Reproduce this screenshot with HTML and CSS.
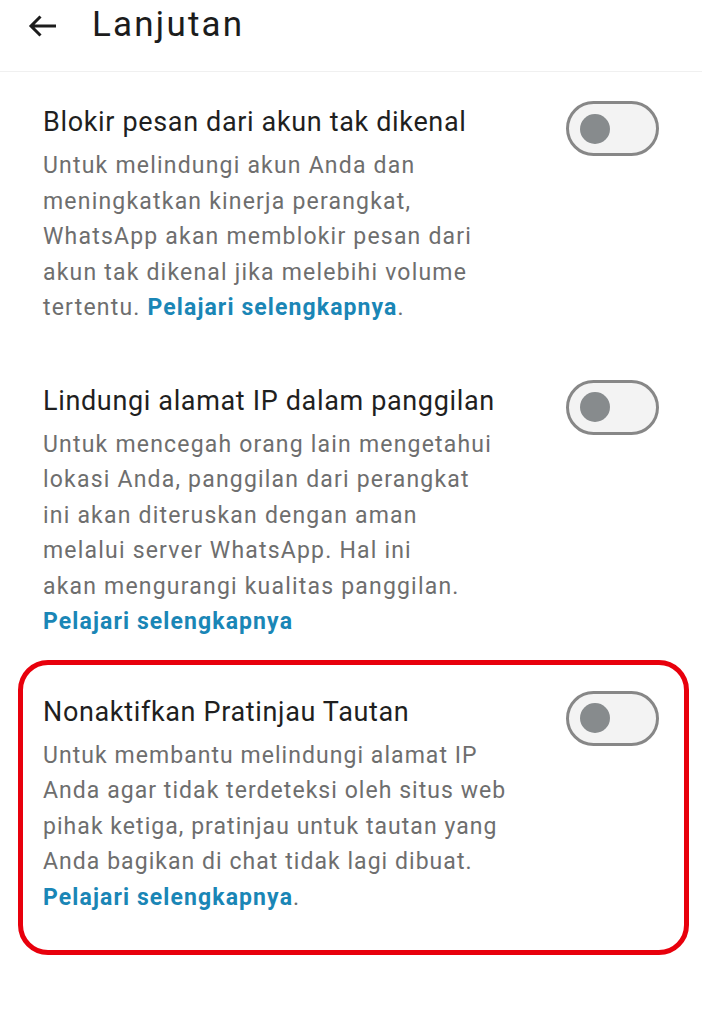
FILE: index.html
```html
<!DOCTYPE html>
<html lang="id">
<head>
<meta charset="utf-8">
<title>Lanjutan</title>
<link rel="stylesheet" href="styles.css">
</head>
<body>
<div class="screen">
  <header class="appbar">
    <svg class="back" width="29" height="22" viewBox="0 0 29 22" aria-hidden="true">
      <path d="M28 11H3M12.5 1.5L3 11l9.5 9.5" fill="none" stroke="#1c1c1c" stroke-width="3" stroke-linecap="butt" stroke-linejoin="miter"/>
    </svg>
    <h1 class="appbar-title">Lanjutan</h1>
  </header>

  <main class="list">
    <section class="item">
      <div class="item-text">
        <h2 class="item-title">Blokir pesan dari akun tak dikenal</h2>
        <p class="item-desc">Untuk melindungi akun Anda dan<br>meningkatkan kinerja perangkat,<br>WhatsApp akan memblokir pesan dari<br>akun tak dikenal jika melebihi volume<br>tertentu. <a class="link" href="#">Pelajari selengkapnya</a>.</p>
      </div>
      <span class="switch"><span class="knob"></span></span>
    </section>

    <section class="item">
      <div class="item-text">
        <h2 class="item-title">Lindungi alamat IP dalam panggilan</h2>
        <p class="item-desc">Untuk mencegah orang lain mengetahui<br>lokasi Anda, panggilan dari perangkat<br>ini akan diteruskan dengan aman<br>melalui server WhatsApp. Hal ini<br>akan mengurangi kualitas panggilan.<br><a class="link" href="#">Pelajari selengkapnya</a></p>
      </div>
      <span class="switch"><span class="knob"></span></span>
    </section>

    <section class="item item--highlight">
      <div class="item-text">
        <h2 class="item-title">Nonaktifkan Pratinjau Tautan</h2>
        <p class="item-desc item-desc--tight">Untuk membantu melindungi alamat IP<br>Anda agar tidak terdeteksi oleh situs web<br>pihak ketiga, pratinjau untuk tautan yang<br>Anda bagikan di chat tidak lagi dibuat.<br><a class="link" href="#">Pelajari selengkapnya</a>.</p>
      </div>
      <span class="switch"><span class="knob"></span></span>
    </section>
  </main>
</div>
</body>
</html>
```

FILE: styles.css
```css
* { box-sizing: border-box; }

html, body {
  margin: 0;
  padding: 0;
  background: #ffffff;
}

body {
  font-family: Roboto, "Liberation Sans", Arial, sans-serif;
  color: #1f1f1f;
}

.screen {
  width: 702px;
  min-height: 1024px;
  background: #ffffff;
}

.appbar {
  height: 72px;
  display: flex;
  align-items: center;
  padding: 0 0 0 28px;
  gap: 35px;
  border-bottom: 1px solid #f0f0f0;
}

.back {
  display: block;
  margin-top: -20px;
}

.appbar-title {
  margin: -22px 0 0 0;
  font-size: 35px;
  font-weight: 400;
  letter-spacing: 2.2px;
  color: #1c1c1c;
  line-height: 40px;
}

.list {
  display: flex;
  flex-direction: column;
  padding-top: 32px;
}

.item {
  display: flex;
  justify-content: space-between;
  align-items: flex-start;
  padding: 0 43px 0 43px;
}

.item + .item {
  margin-top: 57px;
}

.item-title {
  margin: 0;
  font-size: 27px;
  font-weight: 400;
  line-height: 36px;
  letter-spacing: 0.65px;
  color: #1f1f1f;
}

.item-desc {
  margin: 8px 0 0 0;
  font-size: 23px;
  line-height: 35.5px;
  letter-spacing: 1.2px;
  color: #6e6e6e;
}

.item-desc--tight {
  letter-spacing: 1.05px;
}

.link {
  color: #1a86b6;
  font-weight: 700;
  text-decoration: none;
  letter-spacing: 1.1px;
}

.switch {
  flex: none;
  position: relative;
  width: 93px;
  height: 55px;
  margin-top: -3px;
  border: 3px solid #878787;
  border-radius: 28px;
  background: #f3f3f3;
  display: flex;
  align-items: center;
  padding-left: 11px;
}

.knob {
  width: 30px;
  height: 30px;
  border-radius: 50%;
  background: #878b8d;
}

.item--highlight {
  margin: 20px 13px 0 18px;
  padding: 29px 25px 35px 20px;
  border: 5px solid #e8000c;
  border-radius: 30px;
}

.item + .item--highlight {
  margin-top: 20px;
}
```
